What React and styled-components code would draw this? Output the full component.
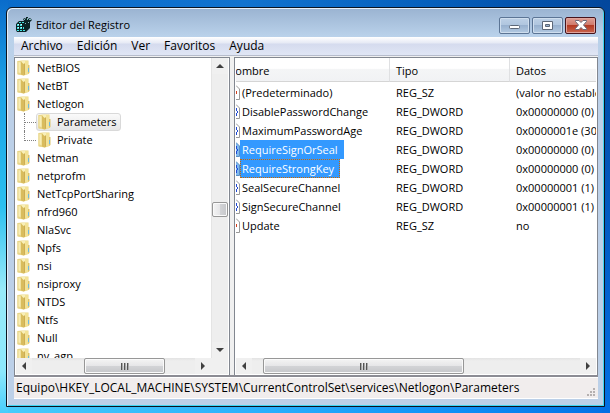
import React from "react";
import styled, { createGlobalStyle, css } from "styled-components";

const Global = createGlobalStyle`
  * { box-sizing: border-box; }
  body { margin: 0; overflow: hidden; font: 11px/18px "Open Sans", "Noto Sans", sans-serif; color: #000; }
  button { font: inherit; color: inherit; border: 0; padding: 0; background: none; }
`;

const Desktop = styled.div`
  height: 100vh;
  padding: 7px 5px 6px 6px;
  background:
    linear-gradient(#0a6ccb, #1ba0e4 20%, #2cc0f0 50%, #98eaf9 70%, #8ce8fc 90%, #48cdfb) left / 8px 100% no-repeat,
    linear-gradient(#03479c, #0259c0 50%, #0470e4) right / 8px 100% no-repeat,
    linear-gradient(90deg, #0a6ccb, #1173cf 40%, #0560bd 70%, #03479c) top / 100% 10px no-repeat,
    linear-gradient(90deg, #48cdfb, #28aefc 45%, #0f8ff6 75%, #0470e4) bottom / 100% 10px no-repeat,
    #1b8ee0;
`;

const Window = styled.main`
  height: 100%;
  display: flex;
  flex-direction: column;
  padding: 0 6px 7px 7px;
  border: 1px solid #0b1420;
  border-radius: 6px 6px 0 0;
  background: linear-gradient(#9ab3d1, #b9d1ea 28px, #bcd0e8 60px);
  box-shadow: inset 1px 1px 0 #e6f0fa, inset -1px -1px 0 #3fd5f2;
`;

const TitleBar = styled.header`
  flex: none;
  height: 29px;
  display: flex;
  align-items: center;
  gap: 4px;
  padding: 5px 2px 0;
`;

const Title = styled.h1`
  flex: 1;
  margin: 0;
  font-size: 11px;
  font-weight: 400;
`;

const Captions = styled.div`
  display: flex;
  gap: 2px;
`;

const CaptionButton = styled.button`
  width: 31px;
  height: 17px;
  display: grid;
  place-items: center;
  border: 1px solid ${(p) => (p.$close ? "#46141c" : "#5c7595")};
  border-radius: 2px;
  box-shadow: inset 0 0 0 1px ${(p) => (p.$close ? "#e0a49c" : "#cfdeee")};
  background: ${(p) =>
    p.$close
      ? "linear-gradient(#dd9e94, #d07b6d 45%, #b33a23 50%, #c9664f)"
      : "linear-gradient(#bdd0e6, #b0c6df 45%, #98b1cf 50%, #b3cae2)"};
`;

const MenuBar = styled.nav`
  flex: none;
  height: 19px;
  display: flex;
  padding-left: 7px;
  gap: 14px;
  font-size: 12px;
  border-bottom: 1px solid #b6bccc;
  background: linear-gradient(#fff, #e6eaf5 6px, #d5dbee 7px, #e0e6f5);
`;

const Panes = styled.div`
  flex: 1;
  min-height: 0;
  display: grid;
  grid-template-columns: 216px 1fr;
  column-gap: 4px;
  padding-top: 1px;
  background: #f0f0f0;
  border-bottom: 2px solid #8c8c94;
`;

const Pane = styled.section`
  min-width: 0;
  min-height: 0;
  display: grid;
  grid-template: minmax(0, 1fr) 16px / minmax(0, 1fr) auto;
  padding: 0 1px 1px;
  border: 1px solid #828790;
  border-bottom: 0;
  background: #fff;
`;

const Viewport = styled.div`
  overflow: hidden;
`;

const Tree = styled.ul`
  margin: 0;
  padding: 1px 0 0 1px;
  list-style: none;
`;

const Branch = styled.ul`
  margin: 0 0 0 7px;
  padding: 0;
  list-style: none;
`;

const Leaf = styled.li`
  display: flex;
  height: 18px;
  &::before {
    content: "";
    width: 11px;
    height: ${(p) => (p.$last ? "10px" : "18px")};
    border-left: 1px dotted #808080;
    background: linear-gradient(90deg, #808080 50%, transparent 50%) 0 9px / 2px 1px repeat-x;
  }
`;

const Key = styled.button`
  height: 18px;
  display: flex;
  align-items: center;
  gap: ${(p) => (p.$nested ? "6px" : "7px")};
  padding: ${(p) => (p.$nested ? "0 3px 0 1px" : "0")};
  border: ${(p) => (p.$nested ? "1px solid transparent" : "0")};
  line-height: 16px;
  white-space: nowrap;
  ${(p) =>
    p.$selected &&
    css`
      border-color: #d9d9d9;
      border-radius: 3px;
      background: linear-gradient(#fafafa, #e6e6e6);
    `}
`;

const Bar = styled.div`
  display: flex;
  flex-direction: ${(p) => (p.$vertical ? "column" : "row")};
  width: ${(p) => (p.$vertical ? "17px" : "auto")};
  background: ${(p) => (p.$vertical ? "#eeeeee" : "linear-gradient(#e3e3e3, #eeeeee 3px)")};
  border: solid #e4e4e4;
  border-width: ${(p) => (p.$vertical ? "0 0 0 1px" : "0")};
`;

const Arrow = styled.button`
  flex: none;
  width: 16px;
  height: 16px;
  display: grid;
  place-items: center;
  background: #f0f0f0;
`;

const Track = styled.div`
  flex: ${(p) => p.$share} 1 0;
`;

const Thumb = styled.button`
  flex: ${(p) => p.$share} 0 15px;
  display: grid;
  place-items: center;
  border: 1px solid #979797;
  border-radius: 2px;
  box-shadow: inset 0 0 0 1px #fafafa;
  background: linear-gradient(${(p) => (p.$vertical ? "90deg" : "180deg")}, #f4f4f4, #e6e6e8 48%, #d2d3d6 52%, #c6c7ca);
`;

const Corner = styled.div`
  background: #f0f0f0;
`;

const Values = styled.table`
  width: 520px;
  margin-left: -13px;
  table-layout: fixed;
  border-collapse: separate;
  border-spacing: 0;
  white-space: nowrap;
  text-align: left;
`;

const Column = styled.col`
  width: ${(p) => p.$width};
`;

const Heading = styled.th`
  height: 24px;
  padding: 3px 0 0 ${(p) => (p.$first ? "4px" : "6px")};
  font-weight: 400;
  border-right: 1px solid #dfe0e2;
  border-bottom: 1px solid #d5d5d5;
  background: linear-gradient(#fff 45%, #f4f5f6 50%, #f1f2f4);
`;

const Cell = styled.td`
  height: 19px;
  padding: 0 0 0 6px;
`;

const Spacer = styled.td`
  height: 1px;
  padding: 0;
`;

const Name = styled.div`
  display: flex;
  margin-left: -5px;
`;

const NameText = styled.span`
  line-height: 19px;
  height: 19px;
  padding: 0 4px 0 2px;
  ${(p) =>
    p.$selected &&
    css`
      padding: 0 6px 0 2px;
      color: #fff;
      background: #3399ff;
    `}
  ${(p) => p.$focused && "outline: 1px dotted #cc6600; outline-offset: -1px;"}
`;

const Status = styled.footer`
  flex: none;
  height: 22px;
  display: flex;
  justify-content: space-between;
  align-items: flex-end;
  padding: 0 2px 1px 2px;
  font-size: 12px;
  border: solid #fff;
  border-width: 1px 0;
  background: #f1eded;
  white-space: nowrap;
`;

const Folder = () => (
  <svg width="13" height="16" viewBox="0 0 13 16" aria-hidden="true">
    <path d="M0.5 1 L5 0.5 H11.5 V14 L7 15.500 L0.5 14.500Z" fill="#ecd784" />
    <path d="M0.5 1 L4 1.500 V14.500 L0.5 14Z" fill="#e8d58a" />
    <path d="M1.500 2 L3.500 2.500 V13 L1.500 12.500Z" fill="#f7edb5" />
    <path d="M4 1.500 L6.500 3 V15.500 L4 14.500Z" fill="#d9bc5c" />
    <path d="M6.500 4 L8 3 V14.500 L6.500 15.500Z" fill="#cdae52" />
    <path d="M8 1 H11 V14 L8 14.500Z" fill="#f3e296" />
    <path d="M4.500 1 H8 V3 L6.500 4 L4.500 2Z" fill="#f8efb8" />
    <path d="M11 5 H12.500 V13 L11 14Z" fill="#dcc36c" />
    <path d="M11 8 H12 V12 H11Z" fill="#6db9e0" />
  </svg>
);

const RegIcon = () => (
  <svg width="16" height="16" viewBox="0 0 16 16" aria-hidden="true">
    <path d="M0 7 L3 4 H8 L7 2 L9 1 L10 2 V0 H12 V2 L14 1 L16 3 L14 5 V11 L10 15 H1 L0 13Z" fill="#0c2426" />
    <path d="M3 5h2v1h-2zM6 5h2v1h-2zM1 7h2v2h-2zM4 7h2v2h-2zM1 10h2v2h-2zM4 10h2v2h-2zM7 10h1v2h-1zM1 13h2v1h-2zM4 13h2v1h-2zM7 13h2v1h-2z" fill="#45e2e2" />
    <path d="M8 2h1v1h-1zM11 1h1v2h-1zM13 2h2v1h-2zM9 6h1v1h-1zM12 5h1v1h-1z" fill="#7fb9bd" />
    <path d="M2 7h1v1h-1zM5 7h1v1h-1zM2 10h1v1h-1zM5 10h1v1h-1z" fill="#d8ffff" />
  </svg>
);

const ValueIcon = ({ text, selected }) => (
  <svg width="16" height="19" viewBox="0 0 16 19" aria-hidden="true">
    <path d="M0.500 2.500H12L15.500 6V16.500H0.500Z" fill={selected ? "#7db8ef" : "#fff"} stroke={selected ? "#5a8fc4" : "#999"} />
    {text ? <path d="M12 8h1v3h-1z" fill="#d3401e" /> : <path d="M12 6h1v3h-1zM13 9h1v2h-1zM12 11h1v3h-1z" fill="#1f49d6" />}
  </svg>
);

const paths = { up: "M0 5L4 1L8 5Z", down: "M0 1L4 5L8 1Z", left: "M5 0L1 4L5 8Z", right: "M1 0L5 4L1 8Z" };

const ArrowIcon = ({ dir }) => {
  const tall = dir === "left" || dir === "right";
  return (
    <svg width={tall ? 6 : 8} height={tall ? 8 : 6} aria-hidden="true">
      <path d={paths[dir]} fill="#404040" />
    </svg>
  );
};

const Grip = () => (
  <svg width="8" height="7" aria-hidden="true">
    <path d="M0 0h1v7H0zM3 0h1v7H3zM6 0h1v7H6z" fill="#555" />
    <path d="M1 0h1v7H1zM4 0h1v7H4zM7 0h1v7H7z" fill="#aaa" />
  </svg>
);

const HScroll = ({ before, thumb, after }) => (
  <Bar>
    <Arrow aria-label="Izquierda"><ArrowIcon dir="left" /></Arrow>
    <Track $share={before} />
    <Thumb $share={thumb} aria-label="Desplazar horizontalmente"><Grip /></Thumb>
    <Track $share={after} />
    <Arrow aria-label="Derecha"><ArrowIcon dir="right" /></Arrow>
  </Bar>
);

const above = ["NetBIOS", "NetBT"];
const below = ["Netman", "netprofm", "NetTcpPortSharing", "nfrd960", "NlaSvc", "Npfs", "nsi", "nsiproxy", "NTDS", "Ntfs", "Null", "nv_agp"];
const children = ["Parameters", "Private"];
const menus = ["Archivo", "Edición", "Ver", "Favoritos", "Ayuda"];
const values = [
  ["(Predeterminado)", "REG_SZ", "(valor no establecido)"],
  ["DisablePasswordChange", "REG_DWORD", "0x00000000 (0)"],
  ["MaximumPasswordAge", "REG_DWORD", "0x0000001e (30)"],
  ["RequireSignOrSeal", "REG_DWORD", "0x00000000 (0)"],
  ["RequireStrongKey", "REG_DWORD", "0x00000000 (0)"],
  ["SealSecureChannel", "REG_DWORD", "0x00000001 (1)"],
  ["SignSecureChannel", "REG_DWORD", "0x00000001 (1)"],
  ["Update", "REG_SZ", "no"],
];
const selectedValues = ["RequireSignOrSeal", "RequireStrongKey"];

const TreeKey = ({ name }) => (
  <li><Key><Folder />{name}</Key></li>
);

export default function App() {
  return (
    <Desktop>
      <Global />
      <Window>
        <TitleBar>
          <RegIcon />
          <Title>Editor del Registro</Title>
          <Captions>
            <CaptionButton aria-label="Minimizar">
              <svg width="11" height="9"><rect x="0.500" y="4.500" width="10" height="3" rx="1" fill="#fff" stroke="#5d6878" /></svg>
            </CaptionButton>
            <CaptionButton aria-label="Maximizar">
              <svg width="11" height="9"><path d="M0.500 0.500h10v8h-10zM3.500 3.500v2h4v-2z" fill="#fff" fillRule="evenodd" stroke="#5d6878" /></svg>
            </CaptionButton>
            <CaptionButton $close aria-label="Cerrar">
              <svg width="12" height="10"><path d="M0.500 0.500h3.500l2 2 2-2h3.500v1l-3 3.500 3 3.500v1h-3.500l-2-2-2 2h-3.500v-1l3-3.500-3-3.500z" fill="#fff" stroke="#6d6a7a" /></svg>
            </CaptionButton>
          </Captions>
        </TitleBar>
        <MenuBar>
          {menus.map((m) => <button key={m}>{m}</button>)}
        </MenuBar>
        <Panes>
          <Pane>
            <Viewport>
              <Tree>
                {above.map((n) => <TreeKey key={n} name={n} />)}
                <li>
                  <Key><Folder />Netlogon</Key>
                  <Branch>
                    {children.map((n, i) => (
                      <Leaf key={n} $last={i === 1}>
                        <Key $nested $selected={i === 0}><Folder />{n}</Key>
                      </Leaf>
                    ))}
                  </Branch>
                </li>
                {below.map((n) => <TreeKey key={n} name={n} />)}
              </Tree>
            </Viewport>
            <Bar $vertical>
              <Arrow aria-label="Arriba"><ArrowIcon dir="up" /></Arrow>
              <Track $share={127} />
              <Thumb $vertical $share={0} aria-label="Desplazar verticalmente" />
              <Track $share={125} />
              <Arrow aria-label="Abajo"><ArrowIcon dir="down" /></Arrow>
            </Bar>
            <HScroll before={52} thumb={66} after={30} />
            <Corner />
          </Pane>
          <Pane>
            <Viewport>
              <Values>
                <colgroup><Column $width="167px" /><Column $width="120px" /><Column $width="auto" /></colgroup>
                <thead>
                  <tr><Heading $first>Nombre</Heading><Heading>Tipo</Heading><Heading>Datos</Heading></tr>
                </thead>
                <tbody>
                  <tr><Spacer colSpan={3} /></tr>
                  {values.map(([name, type, data]) => {
                    const selected = selectedValues.includes(name);
                    return (
                      <tr key={name}>
                        <Cell>
                          <Name>
                            <ValueIcon text={type === "REG_SZ"} selected={selected} />
                            <NameText $selected={selected} $focused={name === "RequireStrongKey"}>{name}</NameText>
                          </Name>
                        </Cell>
                        <Cell>{type}</Cell>
                        <Cell>{data}</Cell>
                      </tr>
                    );
                  })}
                </tbody>
              </Values>
            </Viewport>
            <div />
            <HScroll before={11} thumb={186} after={116} />
          </Pane>
        </Panes>
        <Status>
          Equipo\HKEY_LOCAL_MACHINE\SYSTEM\CurrentControlSet\services\Netlogon\Parameters
          <svg width="9" height="9" aria-hidden="true">
            <path d="M6 0h2v2H6zM3 3h2v2H3zM6 3h2v2H6zM0 6h2v2H0zM3 6h2v2H3zM6 6h2v2H6z" fill="#b5b0b0" />
          </svg>
        </Status>
      </Window>
    </Desktop>
  );
}
